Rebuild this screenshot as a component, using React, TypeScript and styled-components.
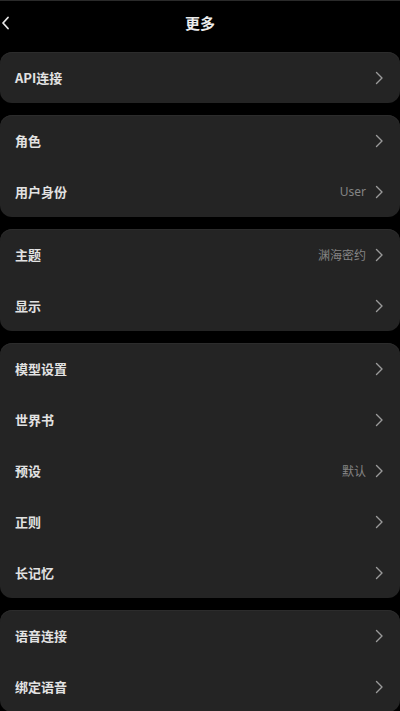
import React from "react";
import styled, { createGlobalStyle } from "styled-components";

const Global = createGlobalStyle`
  html, body { margin: 0; padding: 0; background: #000; }
  body { font-family: "Noto Sans CJK SC", "Noto Sans", sans-serif; -webkit-font-smoothing: antialiased; }
  * { box-sizing: border-box; }
`;

const Page = styled.div`
  width: 400px;
  min-height: 711px;
  background: #000;
  display: flex;
  flex-direction: column;
`;

const Header = styled.div`
  height: 52px;
  display: grid;
  grid-template-columns: 40px 1fr 40px;
  align-items: center;
  border-top: 1px solid #2a2a2a;
`;

const Back = styled.div`
  display: flex;
  align-items: center;
  margin-top: -8px;
  color: #e6e6e6;
`;

const Title = styled.div`
  text-align: center;
  color: #ececec;
  font-size: 15px;
  font-weight: 700;
  margin-top: -8px;
`;

const List = styled.div`
  display: flex;
  flex-direction: column;
  gap: 12px;
`;

const Card = styled.div`
  background: #242424;
  border-radius: 12px;
  box-shadow: inset 0 1px 0 #2c2c2c;
  display: flex;
  flex-direction: column;
`;

const Row = styled.div`
  height: 51px;
  display: flex;
  align-items: center;
  padding: 0 14px 0 15px;
`;

const Label = styled.div`
  flex: 1;
  color: #e2e2e2;
  font-size: 13px;
  font-weight: 700;
`;

const Value = styled.div`
  color: #858585;
  font-size: 12px;
  margin-right: 6px;
  font-family: "Noto Sans", "Noto Sans CJK SC", sans-serif;
`;

const Chev = styled.svg`
  width: 14px;
  height: 14px;
  display: block;
`;

const Chevron = () => (
  <Chev viewBox="0 0 14 14" fill="none">
    <path d="M4.5 1.5 L10 7 L4.5 12.5" stroke="#9a9a9a" strokeWidth="1.4" strokeLinecap="round" strokeLinejoin="round" />
  </Chev>
);

type Item = { label: string; value?: string };

const groups: Item[][] = [
  [{ label: "API连接" }],
  [{ label: "角色" }, { label: "用户身份", value: "User" }],
  [{ label: "主题", value: "渊海密约" }, { label: "显示" }],
  [
    { label: "模型设置" },
    { label: "世界书" },
    { label: "预设", value: "默认" },
    { label: "正则" },
    { label: "长记忆" },
  ],
  [{ label: "语音连接" }, { label: "绑定语音" }],
];

export default function App() {
  return (
    <Page>
      <Global />
      <Header>
        <Back>
          <svg width="12" height="14" viewBox="0 0 12 14" fill="none">
            <path d="M8 1.5 L3 7 L8 12.5" stroke="#e6e6e6" strokeWidth="1.8" strokeLinecap="round" strokeLinejoin="round" />
          </svg>
        </Back>
        <Title>更多</Title>
        <div />
      </Header>
      <List>
        {groups.map((g, i) => (
          <Card key={i}>
            {g.map((it) => (
              <Row key={it.label}>
                <Label>{it.label}</Label>
                {it.value && <Value>{it.value}</Value>}
                <Chevron />
              </Row>
            ))}
          </Card>
        ))}
      </List>
    </Page>
  );
}
